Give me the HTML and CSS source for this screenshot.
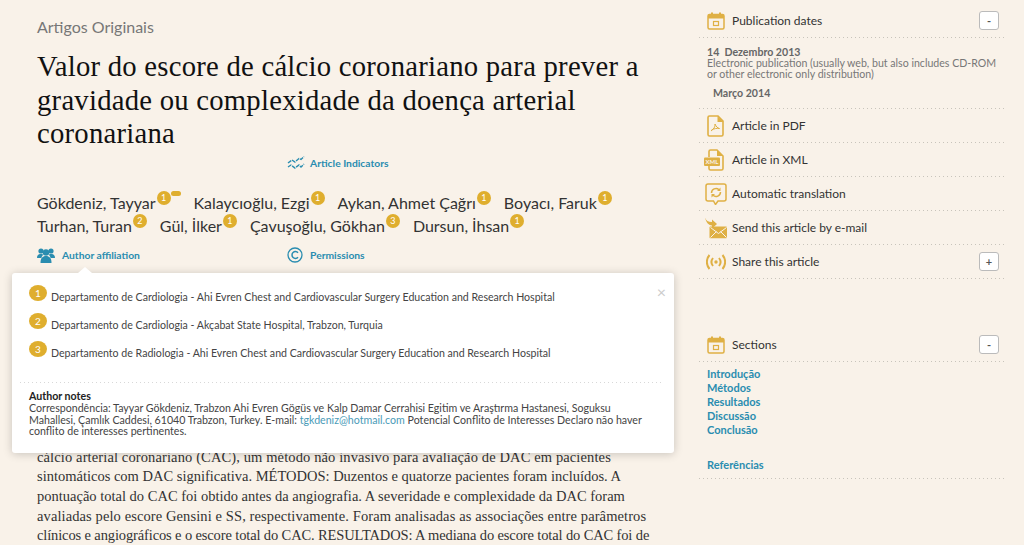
FILE: index.html
```html
<!DOCTYPE html>
<html lang="pt">
<head>
<meta charset="utf-8">
<title>Valor do escore de cálcio coronariano</title>
<link rel="stylesheet" href="styles.css">
</head>
<body>
<div class="page">
<main class="main">
  <p class="kicker">Artigos Originais</p>
  <h1 class="title">Valor do escore de cálcio coronariano para prever a gravidade ou complexidade da doença arterial coronariana</h1>
  <div class="indicators">
    <a class="link link-start">
      <svg class="link-icon" viewBox="0 0 18 16" width="18" height="16"><path d="M1 8l4-3 3 2 4-3.500 2 1 3-3M1 12l3-2 4 3 4-3 2 2 3-3" fill="none" stroke="#2a8db0" stroke-width="1.400" stroke-dasharray="4 1"/></svg>
      Article Indicators
    </a>
  </div>
  <div class="authors">
    <span class="author">Gökdeniz, Tayyar<i class="sup">1</i><i class="sup-dash"></i></span>
    <span class="author">Kalaycıoğlu, Ezgi<i class="sup">1</i></span>
    <span class="author">Aykan, Ahmet Çağrı<i class="sup">1</i></span>
    <span class="author">Boyacı, Faruk<i class="sup">1</i></span>
    <span class="author">Turhan, Turan<i class="sup">2</i></span>
    <span class="author">Gül, İlker<i class="sup">1</i></span>
    <span class="author">Çavuşoğlu, Gökhan<i class="sup">3</i></span>
    <span class="author">Dursun, İhsan<i class="sup">1</i></span>
  </div>
  <div class="meta-links">
    <a class="link link-wide">
      <svg class="link-icon" viewBox="0 0 18 16" width="18" height="16"><g fill="#2a8db0"><circle cx="4" cy="4" r="2.600"/><circle cx="14" cy="4" r="2.600"/><path d="M0 11c0-3 1.500-4 4-4 1 0 2 .2 2.500.8C5 9 4.500 10 4.500 11z"/><path d="M18 11c0-3-1.500-4-4-4-1 0-2 .2-2.500.8 1.500 1.200 2 2.200 2 3.200z"/><circle cx="9" cy="5.500" r="3.200"/><path d="M3.500 16c0-5 2-7 5.500-7s5.500 2 5.500 7z"/></g></svg>
      Author affiliation
    </a>
    <a class="link link-wide">
      <svg class="link-icon" viewBox="0 0 16 16" width="16" height="16"><circle cx="8" cy="8" r="7" fill="none" stroke="#2a8db0" stroke-width="1.300"/><path d="M11 5.800A3.400 3.400 0 1 0 11 10.200" fill="none" stroke="#2a8db0" stroke-width="1.500"/></svg>
      Permissions
    </a>
  </div>
  <div class="abstract">
    <span class="line line-1">cálcio arterial coronariano (CAC), um método não invasivo para avaliação de DAC em pacientes</span>
    <span class="line">sintomáticos com DAC significativa. MÉTODOS: Duzentos e quatorze pacientes foram incluídos. A</span>
    <span class="line">pontuação total do CAC foi obtido antes da angiografia. A severidade e complexidade da DAC foram</span>
    <span class="line line-4">avaliadas pelo escore Gensini e SS, respectivamente. Foram analisadas as associações entre parâmetros</span>
    <span class="line line-5">clínicos e angiográficos e o escore total do CAC. RESULTADOS: A mediana do escore total do CAC foi de</span>
  </div>
</main>

<aside class="side">
  <div class="row">
    <svg class="row-icon" viewBox="0 0 18 18" width="18" height="18"><use href="#cal"/></svg>
    <span class="row-label">Publication dates</span>
    <button class="toggle">-</button>
  </div>
  <div class="dates dotted">
    <p class="date-strong">14&nbsp; Dezembro 2013</p>
    <p class="date-note">Electronic publication (usually web, but also includes CD-ROM or other electronic only distribution)</p>
    <p class="date-strong date-second">Março 2014</p>
  </div>
  <div class="row">
    <svg class="row-icon" viewBox="0 0 17 22" width="17" height="22"><path d="M2.500 1h8.500l5 5V19.500a1.500 1.500 0 0 1-1.500 1.500h-12A1.500 1.500 0 0 1 1 19.500V2.500A1.500 1.500 0 0 1 2.500 1z" fill="none" stroke="#dfb044" stroke-width="1.600"/><path d="M10.500 1v6h6z" fill="#dfb044"/><path d="M8 9c.5 3-1.500 5-4 7M8 9c1 2.500 2.500 4 4.500 4.500M4.500 15c3-1.500 5-1.800 8-1.500" fill="none" stroke="#dfb044" stroke-width="1"/></svg>
    <span class="row-label">Article in PDF</span>
  </div>
  <div class="row">
    <svg class="row-icon icon-xml" viewBox="0 0 20 22" width="20" height="22"><path d="M5 8V2.500A1.500 1.500 0 0 1 6.500 1h6.500L19 7v12.500a1.500 1.500 0 0 1-1.500 1.500h-11A1.500 1.500 0 0 1 5 19.500V17" fill="none" stroke="#dfb044" stroke-width="1.600"/><path d="M13 1v6h6z" fill="#dfb044"/><rect x="0" y="8.500" width="16" height="8.500" rx="1" fill="#dfb044"/><text x="8" y="15" class="xml-text" text-anchor="middle">XML</text></svg>
    <span class="row-label">Article in XML</span>
  </div>
  <div class="row">
    <svg class="row-icon icon-trans" viewBox="0 0 22 22" width="22" height="22"><path d="M3 1h16a2 2 0 0 1 2 2v13a2 2 0 0 1-2 2h-6l-2.500 3.500L8.500 18H3a2 2 0 0 1-2-2V3a2 2 0 0 1 2-2z" fill="none" stroke="#dfb044" stroke-width="1.500"/><path d="M6.500 10a4.500 4.500 0 0 1 7.500-3.300M15.500 9a4.500 4.500 0 0 1-7.500 3.300" fill="none" stroke="#dfb044" stroke-width="1.500"/><path d="M15.500 4.500v3.500H12zM6.500 14.500v-3.500H10z" fill="#dfb044"/></svg>
    <span class="row-label">Automatic translation</span>
  </div>
  <div class="row">
    <svg class="row-icon icon-mail" viewBox="0 0 22 21" width="22" height="21"><rect x="4.500" y="9" width="17.500" height="12" rx="1" fill="#dfb044"/><path d="M5.500 10l8 6 8-6M5.500 20l6-6M21.500 20l-6-6" fill="none" stroke="#f8f1e9" stroke-width="1"/><path d="M0 0c1 3 3 4.500 7 4.500V2l5 4.500-5 4.500V8C4 8 1 5 0 0z" fill="#dfb044"/></svg>
    <span class="row-label">Send this article by e-mail</span>
  </div>
  <div class="row">
    <svg class="row-icon icon-share" viewBox="0 0 20 16" width="20" height="16"><g fill="none" stroke="#dfb044" stroke-width="2"><path d="M3.500 1C0 5 0 11 3.500 15M16.500 1c3.500 4 3.500 10 0 14M7 4c-2 2.500-2 5.500 0 8M13 4c2 2.500 2 5.500 0 8"/></g><circle cx="10" cy="8" r="1.700" fill="#dfb044"/></svg>
    <span class="row-label">Share this article</span>
    <button class="toggle">+</button>
  </div>

  <div class="row row-sections">
    <svg class="row-icon" viewBox="0 0 18 18" width="18" height="18"><use href="#cal"/></svg>
    <span class="row-label">Sections</span>
    <button class="toggle">-</button>
  </div>
  <nav class="section-list dotted">
    <a>Introdução</a>
    <a>Métodos</a>
    <a>Resultados</a>
    <a>Discussão</a>
    <a>Conclusão</a>
    <a class="refs">Referências</a>
  </nav>
</aside>
</div>

<div class="popup">
  <span class="popup-arrow"></span>
  <span class="popup-close">×</span>
  <ul class="aff-list">
    <li class="aff"><i class="aff-badge">1</i>Departamento de Cardiologia - Ahi Evren Chest and Cardiovascular Surgery Education and Research Hospital</li>
    <li class="aff"><i class="aff-badge">2</i>Departamento de Cardiologia - Akçabat State Hospital, Trabzon, Turquia</li>
    <li class="aff"><i class="aff-badge">3</i>Departamento de Radiologia - Ahi Evren Chest and Cardiovascular Surgery Education and Research Hospital</li>
  </ul>
  <div class="notes">
    <strong>Author notes</strong><br>
    Correspondência: Tayyar Gökdeniz, Trabzon Ahi Evren Gögüs ve Kalp Damar Cerrahisi Egitim ve Araştırma Hastanesi, Soguksu<br>
    Mahallesi, Çamlık Caddesi, 61040 Trabzon, Turkey. E-mail: <a>tgkdeniz@hotmail.com</a> Potencial Conflito de Interesses Declaro não haver<br>
    conflito de interesses pertinentes.
  </div>
</div>

<svg class="defs" width="0" height="0"><defs><g id="cal"><rect x="1" y="2.500" width="16" height="14.500" rx="1.500" fill="none" stroke="#dfb044" stroke-width="1.500"/><path d="M1 3h16v3.500H1z" fill="#dfb044"/><rect x="4" y="0.500" width="2" height="3.500" fill="#dfb044"/><rect x="12" y="0.500" width="2" height="3.500" fill="#dfb044"/><rect x="6.500" y="9.500" width="5" height="4" fill="none" stroke="#dfb044" stroke-width="1.200"/></g></defs></svg>
</body>
</html>
```
FILE: styles.css
```css
* { box-sizing: border-box; }
html, body { margin: 0; height: 545px; overflow: hidden; }
body {
  position: relative;
  background: #f9f2e9;
  color: #333;
  font-family: "Lato", "Noto Sans", sans-serif;
}
p, h1, ul { margin: 0; padding: 0; }
.page { display: flex; align-items: flex-start; }
.main { width: 699px; padding: 17px 49px 0 37px; flex: none; }
.kicker { font-size: 16px; line-height: 20px; color: #777; }
.title {
  margin-top: 13px;
  font-family: "Liberation Serif", serif;
  font-weight: 400;
  font-size: 28.700px;
  letter-spacing: .24px;
  line-height: 33.500px;
  color: #111;
}
.link {
  display: flex;
  align-items: center;
  gap: 5px;
  font-size: 10.300px;
  font-weight: 700;
  color: #2a8db0;
}
.link-wide { gap: 7px; }
.indicators { display: flex; height: 16px; margin-top: 4px; padding-left: 250px; }
.authors {
  display: flex;
  flex-wrap: wrap;
  margin-top: 20px;
  font-size: 16px;
  line-height: 23px;
  color: #333;
}
.author { margin-right: 13px; white-space: nowrap; }
.sup {
  display: inline-block;
  width: 14px;
  height: 14px;
  border-radius: 50%;
  background: #dfae2e;
  color: #fff;
  font-style: normal;
  font-size: 9px;
  line-height: 14px;
  text-align: center;
  vertical-align: 5px;
  margin-left: 1px;
  transform: translateY(-3px);
}
.sup-dash {
  display: inline-block;
  width: 10px;
  height: 5px;
  border-radius: 3px;
  background: #dfae2e;
  vertical-align: 11px;
  transform: translateY(-2px);
}
.meta-links { display: grid; grid-template-columns: 250px 1fr; margin-top: 10px; }
.abstract {
  margin-top: 185px;
  font-family: "Liberation Serif", serif;
  font-size: 14.500px;
  line-height: 19.700px;
  color: #333;
  white-space: nowrap;
}
.line { display: block; }
.line-1 { letter-spacing: .12px; }
.line-4 { letter-spacing: .1px; }
.line-5 { letter-spacing: -.13px; }
.side { width: 306px; padding-top: 4px; flex: none; }
.dotted, .row {
  background-image: linear-gradient(to right, #c8c4bb 1px, transparent 1px);
  background-size: 4px 1px;
  background-repeat: repeat-x;
  background-position: left bottom;
}
.row {
  display: flex;
  align-items: center;
  height: 34px;
  padding-bottom: 1px;
  position: relative;
}
.row-icon { position: absolute; left: 8px; top: 50%; transform: translateY(-50%); }
.row-icon.icon-xml { left: 5px; }
.row-icon.icon-trans { left: 6px; }
.row-icon.icon-mail { left: 6px; }
.row-icon.icon-share { left: 7px; }
.row-label { margin-left: 33px; font-size: 12px; color: #333; }
.toggle {
  margin-left: auto;
  margin-right: 6px;
  width: 20px;
  height: 19px;
  padding: 0;
  background: #fff;
  border: 1px solid #bbb;
  border-radius: 3px;
  font: 700 11px "Lato", sans-serif;
  color: #555;
}
.dates { height: 71px; padding: 9px 0 0 8px; font-size: 10.600px; line-height: 11px; color: #777; }
.date-strong { font-weight: 700; color: #666; }
.date-second { margin-top: 8px; margin-left: 6px; }
.row-sections { margin-top: 49px; }
.section-list {
  display: flex;
  flex-direction: column;
  height: 117px;
  padding: 5px 0 0 8px;
  font-size: 11px;
  font-weight: 700;
  line-height: 14px;
  color: #2a8db0;
}
.refs { margin-top: 21px; }
.xml-text { font: 700 6px "Lato", sans-serif; fill: #f8f1e9; }
.defs { position: absolute; }
.popup {
  position: absolute;
  left: 12px;
  top: 273px;
  width: 662px;
  height: 180px;
  background: #fff;
  border-radius: 3px;
  box-shadow: 0 1px 10px rgba(0,0,0,.2);
  padding: 10px 10px 0 8px;
}
.popup-arrow {
  position: absolute;
  left: 66px;
  top: -6px;
  border-left: 7px solid transparent;
  border-right: 7px solid transparent;
  border-bottom: 6px solid #fff;
}
.popup-close { position: absolute; right: 8px; top: 10px; font-size: 16px; line-height: 18px; color: #ccc; }
.aff-list { list-style: none; height: 100px; background-image: linear-gradient(to right, #d8d8d8 1px, transparent 1px); background-size: 4px 1px; background-repeat: repeat-x; background-position: left bottom; }
.aff {
  position: relative;
  display: flex;
  height: 28px;
  padding: 0 0 0 31px;
  align-items: center;
  font-size: 10.600px;
  color: #444;
  white-space: nowrap;
}
.aff-badge {
  position: absolute;
  left: 9px;
  top: 2px;
  width: 18px;
  height: 16px;
  border-radius: 50%;
  background: #dfae2e;
  color: #fff;
  font-style: normal;
  font-size: 10px;
  line-height: 16px;
  text-align: center;
}
.notes { margin-top: 8px; padding-left: 9px; font-size: 10.630px; line-height: 11.800px; color: #444; white-space: nowrap; }
.notes strong { color: #222; }
.notes a { color: #4a9bb8; }
```
